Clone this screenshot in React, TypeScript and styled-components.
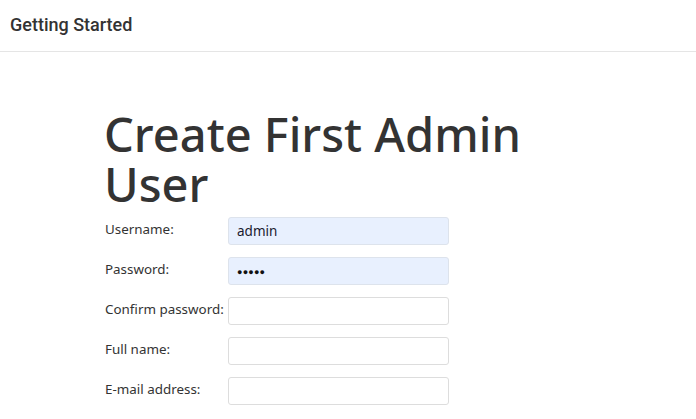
import React from "react";
import styled, { createGlobalStyle } from "styled-components";

const Global = createGlobalStyle`
  html, body { margin: 0; padding: 0; background: #fff; }
  body { font-family: "Noto Sans", sans-serif; color: #333; }
`;

const Header = styled.header`
  height: 52px;
  border-bottom: 1px solid #e5e5e5;
  display: flex;
  align-items: center;
  padding: 0 10px 2px;
  box-sizing: border-box;
`;

const Title = styled.h4`
  margin: 0;
  font-family: Roboto, sans-serif;
  font-weight: 500;
  font-size: 18px;
  color: #333;
`;

const Body = styled.main`
  padding: 57px 0 0 104px;
`;

const Heading = styled.h1`
  margin: 0 0 8px;
  width: 440px;
  font-family: "Noto Sans", sans-serif;
  font-weight: 500;
  font-size: 47px;
  line-height: 50px;
  color: #333;
  letter-spacing: 0;
`;

const Form = styled.div`
  display: grid;
  grid-template-columns: 124px 221px;
  row-gap: 12px;
`;

const Label = styled.label`
  font-family: "Noto Sans", sans-serif;
  font-size: 13.4px;
  color: #333;
  padding: 3px 0 0 1px;
  white-space: nowrap;
`;

const Input = styled.div<{ $filled?: boolean }>`
  height: 28px;
  box-sizing: border-box;
  border: 1px solid ${(p) => (p.$filled ? "#dde3ec" : "#ddd")};
  border-radius: 3px;
  background: ${(p) => (p.$filled ? "#e8f0fe" : "#fff")};
  display: flex;
  align-items: center;
  padding: 0 8px;
  font-family: "Noto Sans", sans-serif;
  font-size: 13.5px;
  color: #1a1a2e;
`;

const Dots = styled.span`
  font-size: 9px;
  letter-spacing: 0.2px;
  color: #111;
`;

export default function App() {
  return (
    <>
      <Global />
      <Header>
        <Title>Getting Started</Title>
      </Header>
      <Body>
        <Heading>Create First Admin User</Heading>
        <Form>
          <Label>Username:</Label>
          <Input $filled>admin</Input>
          <Label>Password:</Label>
          <Input $filled>
            <Dots>●●●●●</Dots>
          </Input>
          <Label>Confirm password:</Label>
          <Input />
          <Label>Full name:</Label>
          <Input />
          <Label>E-mail address:</Label>
          <Input />
        </Form>
      </Body>
    </>
  );
}
